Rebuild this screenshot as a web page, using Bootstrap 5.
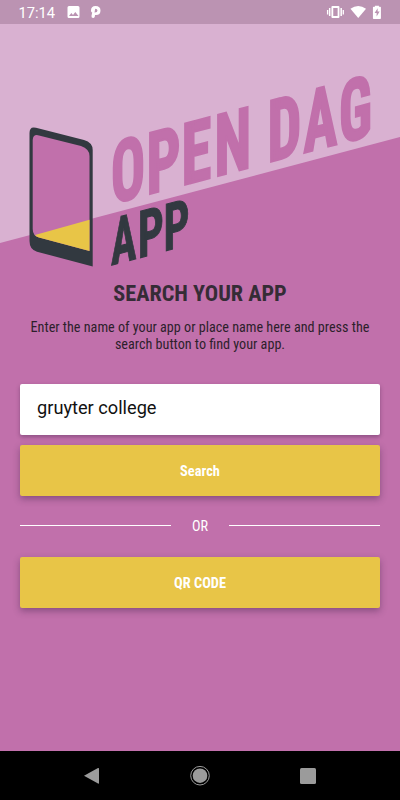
<!DOCTYPE html>
<html lang="en">
<head>
<meta charset="utf-8">
<meta name="viewport" content="width=device-width, initial-scale=1">
<title>Open Dag App</title>
<link href="https://cdn.jsdelivr.net/npm/bootstrap@5.3.0/dist/css/bootstrap.min.css" rel="stylesheet">
<style>
body { font-family: Roboto, sans-serif; background: #c170ab; width: 400px; height: 800px; overflow: hidden; }
.status { height: 24px; background: #bb93b2; font-size: 14.700px; line-height: 24px; padding-left: 18.500px; }
.clock { padding-top: 2px; }
.hero { height: 251px; display: block; overflow: visible; }
.hero text { font-family: "Roboto Condensed", Roboto, sans-serif; font-weight: 700; font-stretch: 75%; stroke-width: 2.400px; stroke-linejoin: miter; }
.hero .sub text { stroke-width: 1px; }
.cond { font-family: "Roboto Condensed", Roboto, sans-serif; font-stretch: 75%; }
.title { font-size: 22.200px; line-height: 28px; margin-top: 4px; color: #352c36; }
.intro { font-size: 14.170px; line-height: 17px; color: #2d1f2b; margin-top: 12px; }
.field { height: 51px; border: 0; border-radius: 2px; font-size: 18.200px; color: #111; padding: 0 17px 5px; margin-top: 31px; box-shadow: 0 2px 4px rgba(60,30,70,.4); }
.action { height: 51px; border: 0; border-radius: 2px; background: #e8c547; color: #fff; font-size: 14.400px; font-weight: 700; padding: 2px 0 0; box-shadow: 0 3px 7px rgba(60,30,70,.42); }
.search { margin-top: 10px; }
.divider { height: 61px; }
.rule { height: 1px; background: #fff; margin-bottom: 2px; }
.or { width: 58px; font-size: 14.200px; line-height: 20px; padding-bottom: 2px; }
.navkeys { height: 49px; background: #000; }
</style>
<script src="https://cdn.jsdelivr.net/npm/bootstrap@5.3.0/dist/js/bootstrap.bundle.min.js"></script>
</head>
<body class="d-flex flex-column m-0">
<header class="status d-flex align-items-center text-white flex-shrink-0">
  <span class="clock">17:14</span>
  <svg class="ms-auto" width="345" height="24" viewBox="55 0 345 24" fill="#fff">
    <path fill-rule="evenodd" d="M69 6h9q1.500 0 1.500 1.500v9q0 1.500-1.500 1.500h-9q-1.500 0-1.500-1.500v-9q0-1.500 1.500-1.500zM69 16h9.500l-3.200-4-2.300 3-1.600-2z"/>
    <path fill-rule="evenodd" d="M91 10.500Q91 6 95.500 6q5 0 5 4.500t-4.500 4.600h-1q0 3-1.800 3-2 0-1.700-2l.7-3.600q-1.200 0-1.200-2zM95.200 8.700l-.7 3.700q3 .2 3-2 0-1.700-2.300-1.700z"/>
    <path fill-rule="evenodd" d="M332.500 6h6q1 0 1 1v10q0 1-1 1h-6q-1 0-1-1V7q0-1 1-1zM333.300 8v8h4.400V8zM329 8h1.500v8H329zM327 10h1.300v4.500H327zM340.500 8h1.500v8h-1.500zM342.700 10h1.300v4.500h-1.300z"/>
    <path d="M350.500 8.700q7.800-5.600 15.600 0L358.300 18z"/>
    <path fill-rule="evenodd" d="M375 5.800h4v1h1.200q.8 0 .8.800v10.600q0 .8-.8.800h-6.400q-.8 0-.8-.8V7.600q0-.8.8-.8h1.200zM377.700 8.200l-3 4.800h2v3.500l3-5h-2z"/>
  </svg>
</header>
<svg class="hero flex-shrink-0" width="400" height="251" viewBox="0 24 400 251">
  <path d="M0 24H400V137L0 243z" fill="#d9b1d1"/>
  <path d="M29.500 133Q29.500 126 36 127.800L84 140Q92.700 142.500 92.700 150V266.500L37 251.700Q29.500 249.500 29.500 241z" fill="#323940"/>
  <path d="M32.700 140Q33 133.800 39 135.400L81 146Q89.500 149 89.500 156V251L39 237.600Q32.700 235.800 32.700 229z" fill="#c170ab"/>
  <path d="M35 235L89.500 219.800V251L39 237.600Q37 237 35 235z" fill="#e8c547"/>
  <g transform="matrix(1 -.265 0 1 0 0)" fill="#c170ab" stroke="#c170ab" font-size="85.500">
    <text transform="translate(111 233.500) scale(.66 1)">O</text>
    <text transform="translate(146.500 233.500) scale(.7 1)">P</text>
    <text transform="translate(181.500 233.500) scale(.71 1)">E</text>
    <text transform="translate(214.500 233.500) scale(.7 1)">N</text>
    <text transform="translate(267.500 233.500) scale(.7 1)">D</text>
    <text transform="translate(303.500 233.500) scale(.66 1)">A</text>
    <text transform="translate(339 233.500) scale(.66 1)">G</text>
  </g>
  <g class="sub" transform="matrix(1 -.265 0 1 0 0)" fill="#323940" stroke="#323940" font-size="65.500">
    <text transform="translate(111 294.900) scale(.65 1)">A</text>
    <text transform="translate(137.700 294.900) scale(.7 1)">P</text>
    <text transform="translate(163.500 294.900) scale(.7 1)">P</text>
  </g>
</svg>
<main class="text-center flex-grow-1 d-flex flex-column">
  <h1 class="title cond fw-bold mb-0">SEARCH YOUR APP</h1>
  <p class="intro cond mb-0">Enter the name of your app or place name here and press the<br>search button to find your app.</p>
  <form class="d-flex flex-column mx-3 px-1">
    <input class="field w-100" type="text" value="gruyter college" aria-label="App name">
    <button class="action search cond w-100" type="button">Search</button>
    <div class="divider d-flex align-items-center text-white">
      <div class="rule flex-fill"></div><div class="or cond">OR</div><div class="rule flex-fill"></div>
    </div>
    <button class="action cond w-100" type="button">QR CODE</button>
  </form>
</main>
<footer class="navkeys flex-shrink-0">
  <svg class="d-block" width="400" height="49" viewBox="0 751 400 49" fill="#9b9b9b">
    <path d="M84 775.700L98 768Q99 767.600 99 768.500V783q0 1-1 .500z"/>
    <circle cx="200" cy="775.700" r="7.300"/><circle cx="200" cy="775.700" r="9.300" fill="none" stroke="#9b9b9b"/>
    <rect x="300" y="768" width="16" height="16" rx="1.500"/>
  </svg>
</footer>
</body>
</html>
